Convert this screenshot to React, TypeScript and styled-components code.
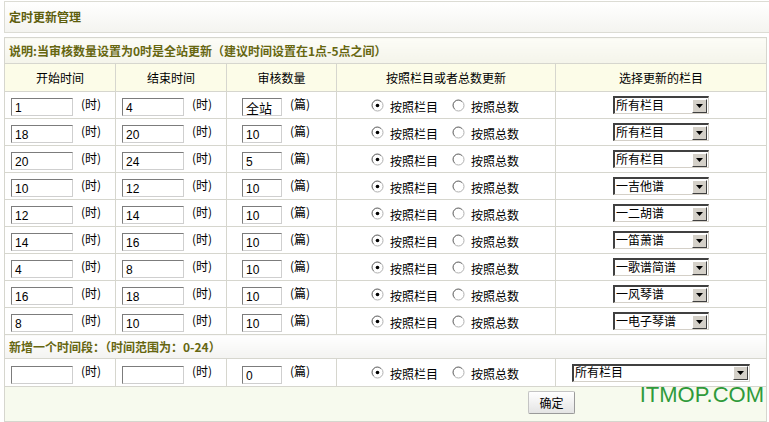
import styled, { createGlobalStyle } from "styled-components";

const GlobalStyle = createGlobalStyle`
  body {
    margin: 0;
    background: #ffffff;
    font-family: "Noto Sans CJK SC", "Liberation Sans", sans-serif;
    font-size: 12px;
    color: #000;
  }
`;

type Row = { start: string; end: string; count: string; column: string };

const rows: Row[] = [
  { start: "1", end: "4", count: "全站", column: "所有栏目" },
  { start: "18", end: "20", count: "10", column: "所有栏目" },
  { start: "20", end: "24", count: "5", column: "所有栏目" },
  { start: "10", end: "12", count: "10", column: "一吉他谱" },
  { start: "12", end: "14", count: "10", column: "一二胡谱" },
  { start: "14", end: "16", count: "10", column: "一笛萧谱" },
  { start: "4", end: "8", count: "10", column: "一歌谱简谱" },
  { start: "16", end: "18", count: "10", column: "一风琴谱" },
  { start: "8", end: "10", count: "10", column: "一电子琴谱" },
];

function Radio({ checked }: { checked?: boolean }) {
  return (
    <svg width="13" height="13" viewBox="0 0 13 13">
      <circle cx="6.5" cy="6.5" r="5.5" fill="#fff" stroke="#b0b0b0" />
      <path d="M2.6 9.8 A5 5 0 0 1 9.8 2.6" fill="none" stroke="#777" strokeWidth="1" />
      {checked && <circle cx="6.5" cy="6.5" r="1.8" fill="#000" />}
    </svg>
  );
}

function Select({ value, wide }: { value: string; wide?: boolean }) {
  return (
    <SelectBox $wide={wide}>
      <SelectText>{value}</SelectText>
      <ArrowBtn>
        <svg width="7" height="4" viewBox="0 0 7 4">
          <path d="M0 0 H7 L3.5 4 Z" fill="#000" />
        </svg>
      </ArrowBtn>
    </SelectBox>
  );
}

function ModeCell() {
  return (
    <Modes>
      <Radio checked />
      <ModeLabel>按照栏目</ModeLabel>
      <Radio />
      <ModeLabel>按照总数</ModeLabel>
    </Modes>
  );
}

function App() {
  return (
    <Page>
      <GlobalStyle />
      <TitleBar>定时更新管理</TitleBar>
      <Table>
        <colgroup>
          <col style={{ width: 111 }} />
          <col style={{ width: 111 }} />
          <col style={{ width: 110 }} />
          <col style={{ width: 219 }} />
          <col />
        </colgroup>
        <tbody>
          <NoteRow>
            <td colSpan={5}>
              <Note>说明:当审核数量设置为0时是全站更新（建议时间设置在1点-5点之间）</Note>
            </td>
          </NoteRow>
          <HeadRow>
            <th>开始时间</th>
            <th>结束时间</th>
            <th>审核数量</th>
            <th>按照栏目或者总数更新</th>
            <th>选择更新的栏目</th>
          </HeadRow>
          {rows.map((r, i) => (
            <DataRow key={i}>
              <td>
                <Field>
                  <TextInput $w={62}>{r.start}</TextInput>
                  <Unit>(时)</Unit>
                </Field>
              </td>
              <td>
                <Field>
                  <TextInput $w={62}>{r.end}</TextInput>
                  <Unit>(时)</Unit>
                </Field>
              </td>
              <td>
                <Field $indent={15}>
                  <TextInput $w={40} $big={r.count === "全站"}>{r.count}</TextInput>
                  <Unit>(篇)</Unit>
                </Field>
              </td>
              <td>
                <ModeCell />
              </td>
              <td>
                <Centered>
                  <Select value={r.column} />
                </Centered>
              </td>
            </DataRow>
          ))}
          <NoteRow $plain>
            <td colSpan={5}>
              <Note>新增一个时间段：（时间范围为：0-24）</Note>
            </td>
          </NoteRow>
          <DataRow $tall>
            <td>
              <Field>
                <TextInput $w={62} />
                <Unit>(时)</Unit>
              </Field>
            </td>
            <td>
              <Field>
                <TextInput $w={62} />
                <Unit>(时)</Unit>
              </Field>
            </td>
            <td>
              <Field $indent={15}>
                <TextInput $w={40}>0</TextInput>
                <Unit>(篇)</Unit>
              </Field>
            </td>
            <td>
              <ModeCell />
            </td>
            <td>
              <Centered>
                <Select value="所有栏目" wide />
              </Centered>
            </td>
          </DataRow>
          <FootRow>
            <td colSpan={5}>
              <FootInner>
                <SubmitBtn>确定</SubmitBtn>
                <Watermark>ITMOP.COM</Watermark>
              </FootInner>
            </td>
          </FootRow>
        </tbody>
      </Table>
    </Page>
  );
}

export default App;

const Page = styled.div`
  width: 769px;
  height: 422px;
  overflow: hidden;
  padding-left: 4px;
  box-sizing: border-box;
`;

const TitleBar = styled.div`
  height: 28px;
  margin-top: 1px;
  border: 1px solid #dcdcd4;
  border-right: none;
  background: linear-gradient(#ffffff, #f4f4f0);
  padding: 0 0 2px 4px;
  display: flex;
  align-items: center;
  font-weight: bold;
  font-size: 12px;
  color: #5e5e0c;
  margin-bottom: 4px;
`;

const Table = styled.table`
  width: 763px;
  border-collapse: collapse;
  table-layout: fixed;

  td,
  th {
    border: 1px solid #d6d6ce;
    padding: 0;
  }
`;

const NoteRow = styled.tr<{ $plain?: boolean }>`
  height: ${(p) => (p.$plain ? 24 : 26)}px;
  td {
    background: ${(p) =>
      p.$plain ? "linear-gradient(#ffffff, #f3f3f1)" : "linear-gradient(#fcfcf7, #f4f4ea)"};
    padding-left: 4px;
  }
`;

const Note = styled.span`
  font-weight: bold;
  color: #666610;
  font-size: 12px;
`;

const HeadRow = styled.tr`
  height: 28px;
  th {
    background: #fcfce8;
    font-weight: normal;
    font-size: 12px;
    color: #000;
    text-align: center;
  }
`;

const DataRow = styled.tr<{ $tall?: boolean }>`
  height: ${(p) => (p.$tall ? 28 : 27)}px;
  td {
    background: #fff;
  }
`;

const Field = styled.div<{ $indent?: number }>`
  display: flex;
  align-items: center;
  padding-left: ${(p) => p.$indent ?? 6}px;
  gap: 8px;
`;

const TextInput = styled.div<{ $w: number; $big?: boolean }>`
  width: ${(p) => p.$w}px;
  height: 18px;
  box-sizing: border-box;
  border-top: 1px solid #7c7c7c;
  border-left: 1px solid #7c7c7c;
  border-right: 1px solid #cfcfcf;
  border-bottom: 1px solid #cfcfcf;
  background: #fff;
  font-family: ${(p) => (p.$big ? '"Noto Sans CJK SC"' : '"Liberation Sans"')}, sans-serif;
  font-size: ${(p) => (p.$big ? 13 : 12)}px;
  line-height: 1;
  padding: 0 0 0 3px;
  display: flex;
  align-items: flex-end;
  padding-bottom: 1px;
  margin-top: 4px;
`;

const Unit = styled.span`
  font-size: 12px;
  margin-top: -4px;
`;

const Modes = styled.div`
  display: flex;
  align-items: center;
  padding-left: 34px;

  svg {
    flex: none;
  }
`;

const ModeLabel = styled.span`
  font-size: 12px;
  margin: 2px 14px 0 6px;
`;

const Centered = styled.div`
  display: flex;
  justify-content: center;
`;

const SelectBox = styled.div<{ $wide?: boolean }>`
  width: ${(p) => (p.$wide ? 178 : 96)}px;
  height: 18px;
  box-sizing: border-box;
  border-top: 2px solid #404040;
  border-left: 2px solid #404040;
  border-right: 1px solid #d4d0c8;
  border-bottom: 1px solid #d4d0c8;
  background: #fff;
  display: flex;
  align-items: center;
  justify-content: space-between;
`;

const SelectText = styled.span`
  font-size: 12px;
  padding-left: 1px;
  margin-top: -3px;
`;

const ArrowBtn = styled.div`
  width: 15px;
  height: 14px;
  box-sizing: border-box;
  background: #d4d0c8;
  border-top: 1px solid #fff;
  border-left: 1px solid #fff;
  border-right: 1px solid #404040;
  border-bottom: 1px solid #404040;
  display: flex;
  align-items: center;
  justify-content: center;
  margin-right: 1px;
`;

const FootRow = styled.tr`
  height: 35px;
  td {
    background: #f7faee;
    vertical-align: top;
  }
`;

const FootInner = styled.div`
  position: relative;
  display: flex;
  padding: 4px 0 0 523px;
`;

const SubmitBtn = styled.button`
  width: 47px;
  height: 23px;
  border: 1px solid #c4c4c4;
  border-right-color: #9a9a9a;
  border-bottom-color: #9a9a9a;
  border-radius: 2px;
  background: linear-gradient(#ffffff, #e4e4e4);
  font-family: "Noto Sans CJK SC", sans-serif;
  font-size: 12px;
  color: #000;
  padding: 0;
`;

const Watermark = styled.span`
  position: absolute;
  right: 2px;
  top: -5px;
  font-family: "Liberation Sans", sans-serif;
  font-size: 22px;
  color: #2f9a3a;
`;
